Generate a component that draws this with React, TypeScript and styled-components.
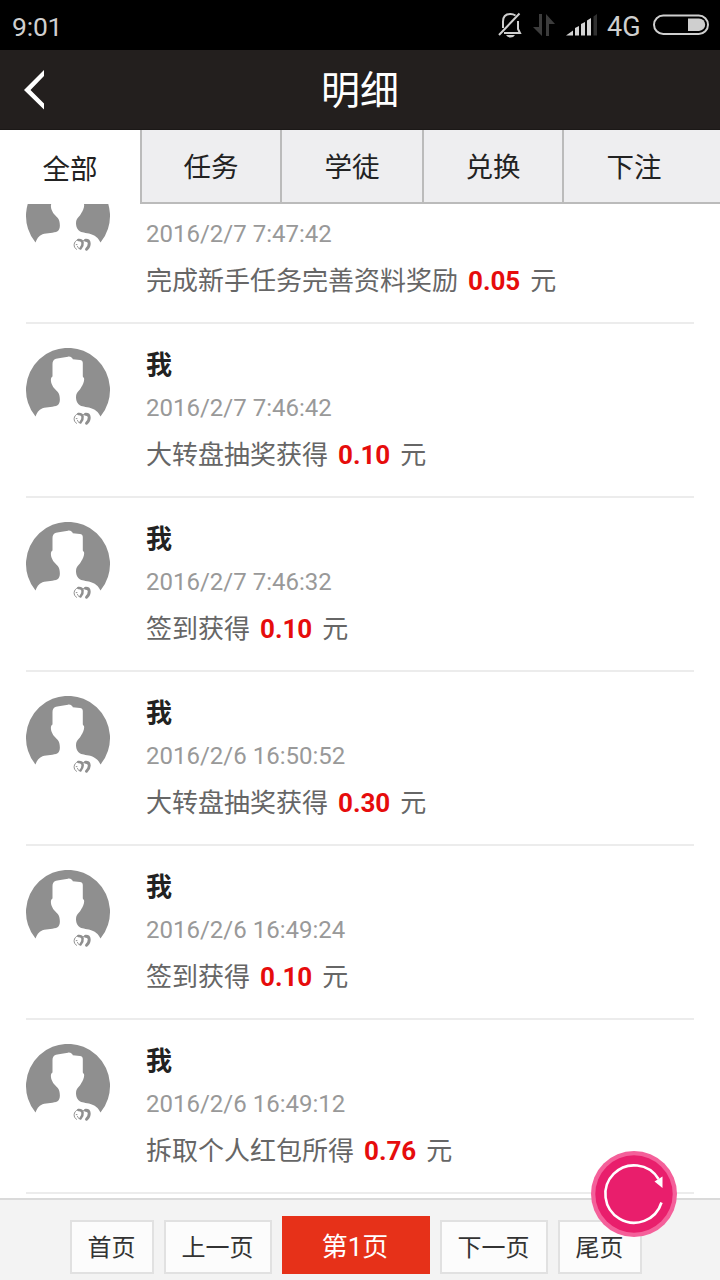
import React from 'react';
import styled, { createGlobalStyle } from 'styled-components';

const GlobalStyle = createGlobalStyle`
  * { box-sizing: border-box; }
  body {
    margin: 0;
    background: #fff;
    font-family: Roboto, "Noto Sans CJK SC", sans-serif;
  }
`;

const Screen = styled.div`
  position: relative;
  display: flex;
  flex-direction: column;
  width: 720px;
  height: 1280px;
  overflow: hidden;
  background: #fff;
`;

const StatusBar = styled.div`
  display: flex;
  align-items: center;
  flex: 0 0 50px;
  height: 50px;
  padding: 0 11px 0 12px;
  background: #000;
  color: #cfcfcf;
  font-size: 26px;
  line-height: 30px;
`;

const Clock = styled.span`
  flex: 1;
  padding-top: 3px;
  font-size: 26.5px;
  letter-spacing: -0.2px;
`;

const Network = styled.span`
  width: 35px;
  margin: 0 11px 0 9px;
  padding-top: 3px;
  font-size: 27px;
`;

const StatusIcon = styled.svg<{ $gap?: number }>`
  flex: none;
  display: block;
  margin-right: ${(p) => p.$gap ?? 0}px;
`;

const TitleBar = styled.header`
  display: grid;
  grid-template-columns: 80px 1fr 80px;
  align-items: center;
  flex: 0 0 80px;
  background: #231f1e;
  border-bottom: 1px solid #1b1817;
`;

const Back = styled.button`
  display: flex;
  padding: 0 0 0 24px;
  border: 0;
  background: none;
`;

const Title = styled.h1`
  margin: 0;
  padding-top: 3px;
  text-align: center;
  color: #fff;
  font-size: 39px;
  font-weight: 400;
  line-height: 76px;
`;

const Tabs = styled.nav`
  display: grid;
  grid-template-columns: 140px 140px 142px 140px 158px;
  flex: 0 0 74px;
`;

const Tab = styled.button<{ $active?: boolean }>`
  padding: ${(p) => (p.$active ? '5px 0 0' : '3px 0 0')};
  border: 0;
  border-left: ${(p) => (p.$active ? '0' : '2px solid #bbb')};
  border-bottom: ${(p) => (p.$active ? '0' : '2px solid #bbb')};
  background: ${(p) => (p.$active ? '#fff' : '#eeeef0')};
  color: #222;
  font: 400 27.5px/68px Roboto, "Noto Sans CJK SC", sans-serif;
  &:last-child { padding-right: 16px; }
`;

const List = styled.main`
  flex: 0 0 994px;
  overflow: hidden;
  padding: 0 26px;
`;

const Row = styled.article`
  display: flex;
  gap: 36px;
  height: 174px;
  padding-top: 24px;
  border-bottom: 2px solid #ececec;
  &:first-child { margin-top: -54px; }
`;

const Entry = styled.div`
  display: flex;
  flex-direction: column;
`;

const Name = styled.strong`
  min-height: 34px;
  color: #222;
  font-size: 26px;
  font-weight: 700;
  line-height: 34px;
`;

const Time = styled.time`
  margin-top: 10px;
  color: #999;
  font-size: 24px;
  line-height: 32px;
`;

const Detail = styled.p`
  margin: 13px 0 0;
  color: #666;
  font-size: 26px;
  line-height: 36px;
  white-space: pre;
`;

const Amount = styled.b`
  margin: 0 3.5px;
  color: #e60c0c;
`;

const Pager = styled.footer`
  display: flex;
  align-items: flex-start;
  gap: 10px;
  flex: 0 0 82px;
  padding: 16px 0 0 70px;
  border-top: 2px solid #dadada;
  background: #f3f3f3;
`;

const PageButton = styled.button<{ $w: number; $current?: boolean }>`
  width: ${(p) => p.$w}px;
  height: ${(p) => (p.$current ? 58 : 54)}px;
  margin-top: ${(p) => (p.$current ? 0 : 4)}px;
  padding: ${(p) => (p.$current ? '4px 2px 0 0' : '2px 1px 0 0')};
  border: ${(p) => (p.$current ? '0' : '2px solid #e1e1e1')};
  background: ${(p) => (p.$current ? '#e63119' : '#fcfcfc')};
  color: ${(p) => (p.$current ? '#fff' : '#333')};
  font: 400 ${(p) => (p.$current ? 26 : 24)}px/48px Roboto, "Noto Sans CJK SC", sans-serif;
`;

const RefreshButton = styled.button`
  position: absolute;
  left: 591px;
  top: 1151px;
  width: 86px;
  height: 86px;
  padding: 0;
  border: 0;
  background: none;
`;

const Avatar = () => (
  <svg width="84" height="84" viewBox="0 0 84 84">
    <path
      fill="#8f8f8f"
      d="M9.500 68.500A42 42 0 1 1 74.500 68.500C72.500 64 69 61 63 59.500C58 58.500 54.500 58.500 52.300 56C50 53.500 49.500 49 50.500 46C51.500 43.500 54 42.500 55.200 39.300C57 36.500 58.700 32.500 58 30.300L56.800 28.500V15C56.800 13 55.500 12.200 54 12L46.800 11.300C46.500 10 44.500 8.200 42 8.700C38 9.500 33.500 9.800 30 10.700C27.500 11.500 26.500 13.500 26.500 16V28.500C24 30 24.800 34 26.300 37.300C28 41.500 32.300 43 33.300 47C34.200 51 34.300 55 31.500 57.200C28 59.300 21 58.500 16.500 60.300C12.500 62 10.500 65.500 9.500 68.500Z"
    />
    <g fill="none" stroke="#8f8f8f" strokeLinecap="round">
      <path strokeWidth="1" d="M50.500 75.300C47 73.500 47 67.500 52 65.600M50.200 70.600H51" />
      <path strokeWidth="2.500" d="M52.300 66C57.500 65.500 57.800 70.500 54.500 74.500" />
      <path strokeWidth="1" d="M51.500 72.500C52 74.500 53.500 75 54.500 74.500M57 67L59 65.800" />
      <path strokeWidth="2.900" d="M59.500 66.300C64.300 66 64.300 71.500 60.500 75.300" />
    </g>
  </svg>
);

const records = [
  { time: '2016/2/7 7:47:42', text: '完成新手任务完善资料奖励', amount: '0.05' },
  { name: '我', time: '2016/2/7 7:46:42', text: '大转盘抽奖获得', amount: '0.10' },
  { name: '我', time: '2016/2/7 7:46:32', text: '签到获得', amount: '0.10' },
  { name: '我', time: '2016/2/6 16:50:52', text: '大转盘抽奖获得', amount: '0.30' },
  { name: '我', time: '2016/2/6 16:49:24', text: '签到获得', amount: '0.10' },
  { name: '我', time: '2016/2/6 16:49:12', text: '拆取个人红包所得', amount: '0.76' },
];

const tabs = ['全部', '任务', '学徒', '兑换', '下注'];

const pages = [
  { label: '首页', width: 84 },
  { label: '上一页', width: 108 },
  { label: '第1页', width: 148, current: true },
  { label: '下一页', width: 108 },
  { label: '尾页', width: 84 },
];

export default function App() {
  return (
    <>
      <GlobalStyle />
      <Screen>
        <StatusBar>
          <Clock>9:01</Clock>
          <StatusIcon $gap={11} width="24" height="26" viewBox="0 0 24 26" fill="none" stroke="#cfcfcf" strokeWidth="2">
            <path d="M5 16V9.500C5 4.500 8 2 12.500 2C14.500 2 16 2.500 17.500 3.500M20 9V17L22 21H6M1 23L21.500 1.500" />
            <path fill="#cfcfcf" stroke="none" d="M8 23H17Q15.500 25.500 12.500 25.500T8 23Z" />
          </StatusIcon>
          <StatusIcon $gap={11} width="22" height="22" viewBox="0 0 22 22" fill="#3c3c3c">
            <path d="M6 0H9V22L0 13H6ZM13 0L22 10H16V22H13Z" />
          </StatusIcon>
          <StatusIcon width="32" height="22" viewBox="0 0 32 22" fill="#d4d4d4">
            <path d="M0 21.500L7 16.500V21.500ZM9 14L13 12V21.500H9ZM15 10L19 8V21.500H15ZM21 6.500L25 4V21.500H21Z" />
            <path fill="#303030" d="M27.500 2.500L31 0V21.500H27.500Z" />
          </StatusIcon>
          <Network>4G</Network>
          <StatusIcon width="56" height="22" viewBox="0 0 56 22">
            <rect x="1" y="1.500" width="54" height="18.500" rx="9.250" fill="none" stroke="#cfcfcf" strokeWidth="2" />
            <path fill="#cfcfcf" d="M35 4.500H46A6.200 6.200 0 0 1 46 16.900H35Z" />
          </StatusIcon>
        </StatusBar>
        <TitleBar>
          <Back aria-label="返回">
            <svg width="21" height="40" viewBox="0 0 21 40">
              <path fill="#fff" d="M20 0V6L6.500 20L20 33.500V39.500L0 20Z" />
            </svg>
          </Back>
          <Title>明细</Title>
        </TitleBar>
        <Tabs>
          {tabs.map((t, i) => (
            <Tab key={t} $active={i === 0}>{t}</Tab>
          ))}
        </Tabs>
        <List>
          {records.map((r) => (
            <Row key={r.time}>
              <Avatar />
              <Entry>
                <Name>{r.name}</Name>
                <Time>{r.time}</Time>
                <Detail>
                  {r.text} <Amount>{r.amount}</Amount> 元
                </Detail>
              </Entry>
            </Row>
          ))}
        </List>
        <Pager>
          {pages.map((p) => (
            <PageButton key={p.label} $w={p.width} $current={p.current}>{p.label}</PageButton>
          ))}
        </Pager>
        <RefreshButton aria-label="刷新">
          <svg width="86" height="86" viewBox="0 0 86 86">
            <circle cx="43" cy="43" r="43" fill="#f4609a" />
            <circle cx="43" cy="43" r="38.700" fill="#e91e6c" />
            <path d="M70.500 51.500A28.700 28.700 0 1 1 67.500 28" fill="none" stroke="#fff" strokeWidth="2.600" />
            <path d="M63.500 30.500L71.500 25.500V37Z" fill="#fff" />
          </svg>
        </RefreshButton>
      </Screen>
    </>
  );
}
